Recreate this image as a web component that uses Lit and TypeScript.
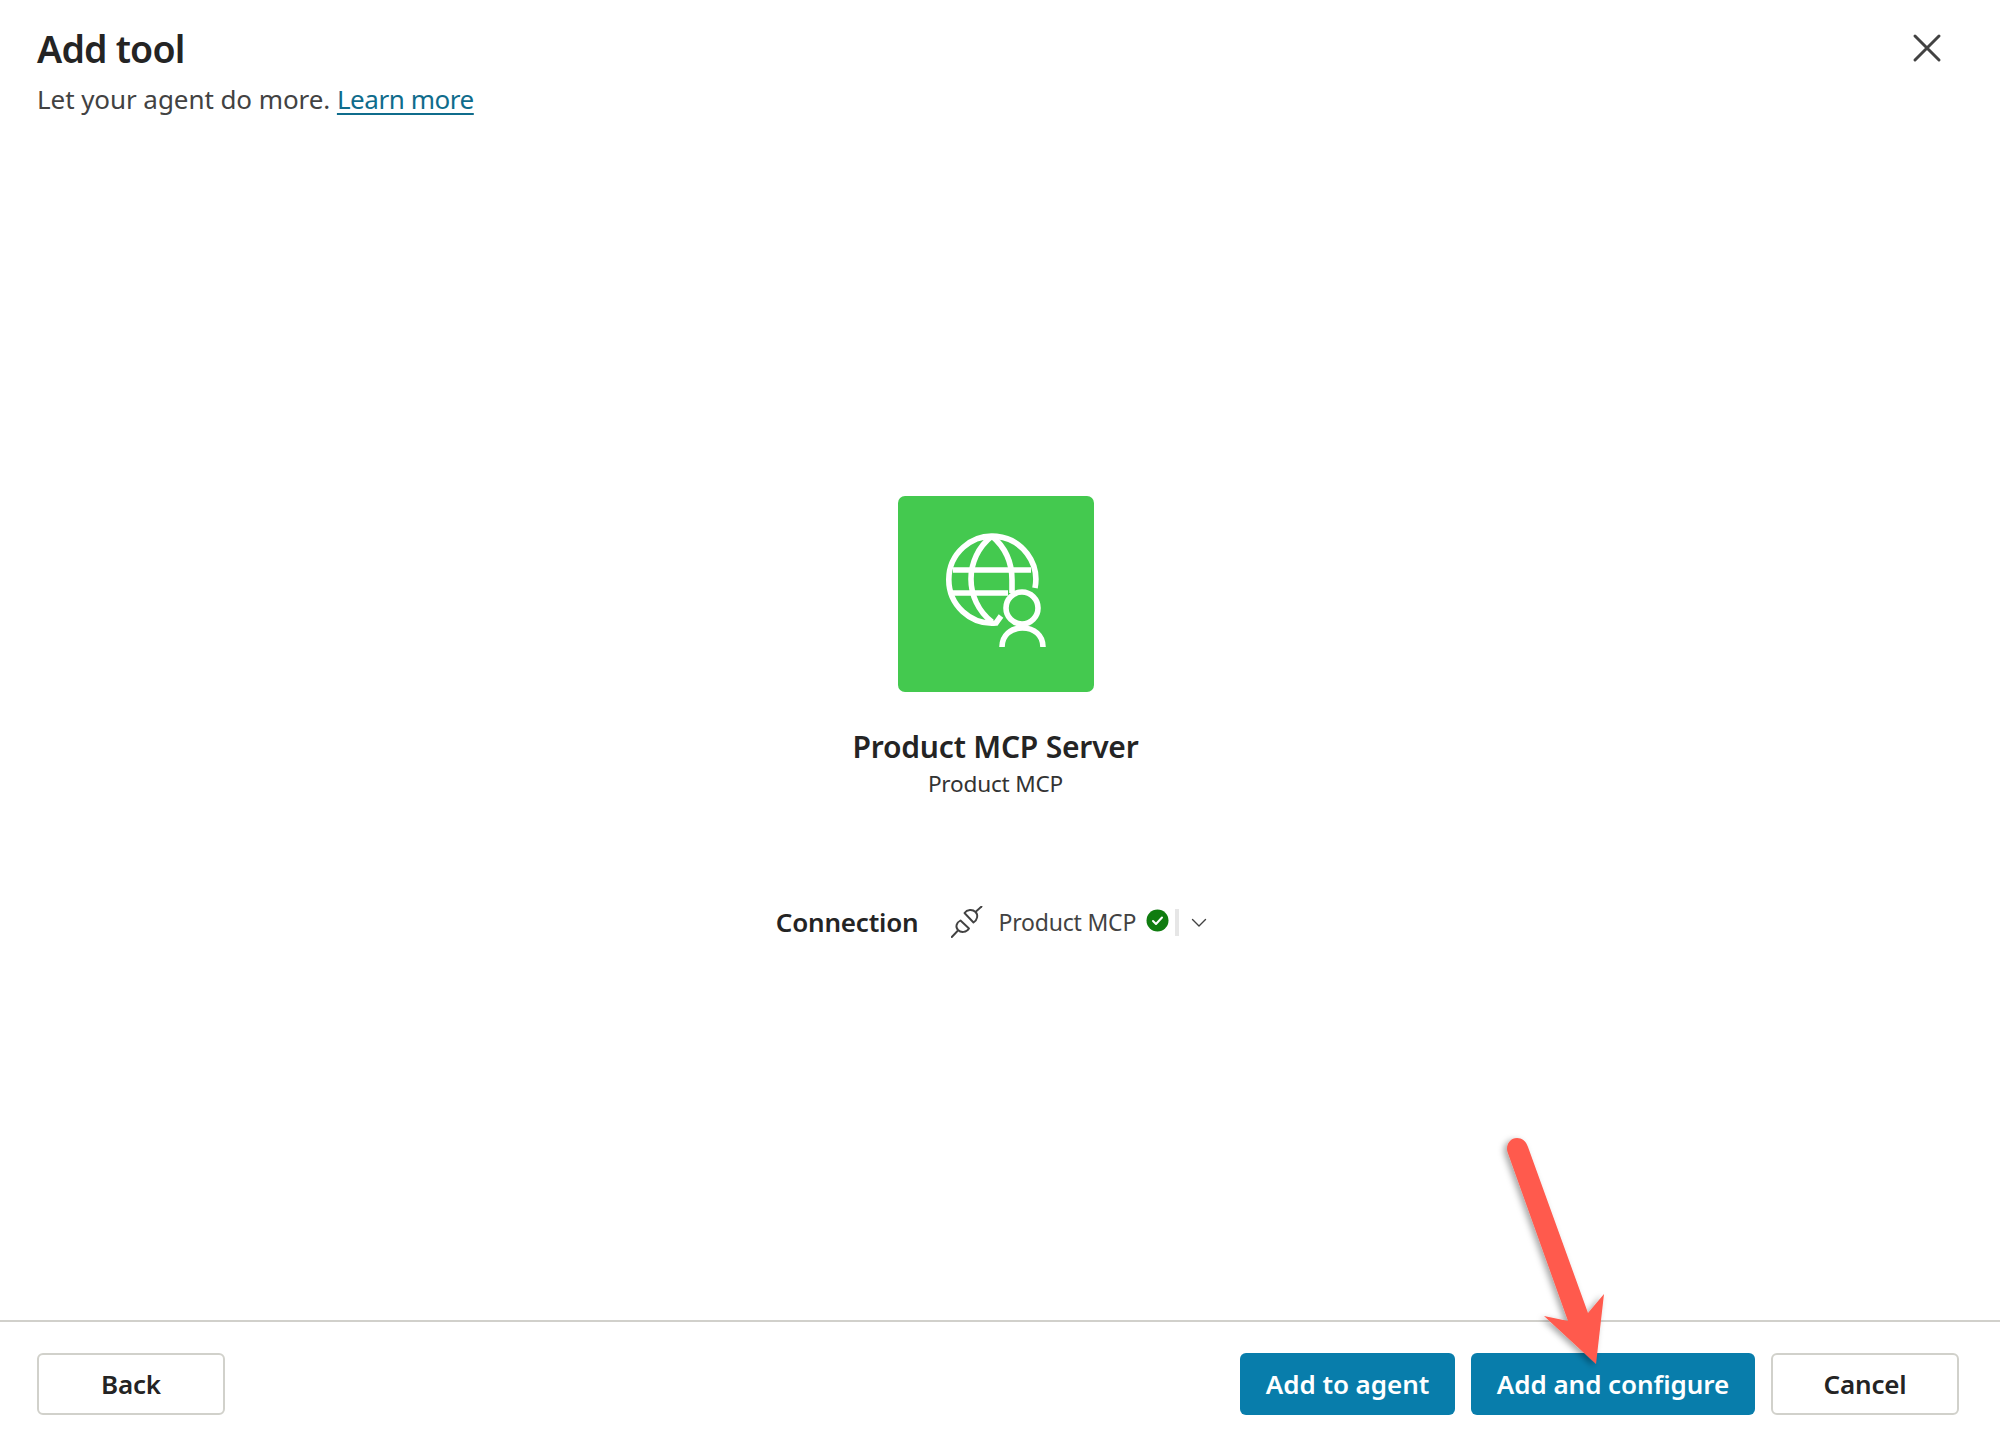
import { LitElement, html, css, svg } from "lit";
import { customElement } from "lit/decorators.js";

const globeIcon = svg`
  <g fill="none" stroke="#fff" stroke-width="5.6">
    <path d="M137 92 A43.5 43.5 0 1 0 98 127 L103 120" />
    <path d="M94 40 C66 62 66 104 94 126" />
    <path d="M94 40 C108 52 114 66 114 84 V97" />
    <path d="M55 74 H133" />
    <path d="M55 97 H110" />
    <circle cx="124" cy="112" r="16" />
    <path d="M104 151 C104 139 113 132 124.5 132 C136 132 145 139 145 151" />
  </g>`;

@customElement("app-root")
export class AppRoot extends LitElement {
  static styles = css`
    :host {
      display: flex;
      flex-direction: column;
      position: relative;
      width: 2000px;
      height: 1443px;
      overflow: hidden;
      background: #fff;
      color: #242424;
      font-family: "Noto Sans", "Open Sans", sans-serif;
    }
    .header {
      display: flex;
      justify-content: space-between;
      align-items: flex-start;
      padding: 24px 50px 0 37px;
    }
    h1 {
      margin: 0;
      font-size: 37.5px;
      line-height: 50px;
      font-weight: 600;
      letter-spacing: -0.8px;
    }
    .sub {
      margin: 5px 0 0;
      font-size: 26px;
      line-height: 40px;
      color: #424242;
      letter-spacing: -0.07px;
    }
    .sub a {
      color: #0f6c8c;
      text-decoration: underline;
      text-underline-offset: 4px;
      text-decoration-thickness: 1.5px;
      letter-spacing: -0.45px;
    }
    .close {
      display: block;
      margin-top: -1px;
      width: 48px;
      height: 48px;
    }
    .main {
      flex: 1;
      display: flex;
      flex-direction: column;
      align-items: center;
      padding: 377px 9px 0 0;
      min-height: 0;
    }
    .tile {
      width: 196px;
      height: 196px;
      border-radius: 7px;
      background: #44c94f;
    }
    .tile svg { display: block; width: 196px; height: 196px; }
    .name {
      margin-top: 35px;
      font-size: 30px;
      line-height: 40px;
      font-weight: 600;
      letter-spacing: -0.2px;
    }
    .vendor {
      margin-top: -1px;
      font-size: 22.6px;
      line-height: 36px;
      color: #333;
      letter-spacing: -0.2px;
    }
    .conn {
      margin-top: 100px;
      display: flex;
      align-items: center;
      height: 40px;
      margin-left: -8px;
    }
    .conn-label {
      font-size: 26px;
      font-weight: 600;
      letter-spacing: -0.2px;
      margin-right: 33px;
    }
    .plug { display: block; width: 32px; height: 32px; margin-right: 15px; }
    .conn-value {
      font-size: 23px;
      color: #424242;
      letter-spacing: -0.2px;
    }
    .ok { display: block; width: 23px; height: 23px; margin: -3px 0 0 10px; }
    .sep { width: 4px; height: 27px; background: #e6e6e6; margin: 0 12px 0 6px; }
    .chev { display: block; width: 16px; height: 10px; margin-top: 2px; }
    .footer {
      border-top: 2px solid #d1d0cb;
      display: flex;
      align-items: center;
      justify-content: space-between;
      padding: 31px 41px 28px 37px;
    }
    .actions { display: flex; gap: 16px; }
    button {
      font: 600 26px/1 "Noto Sans", "Open Sans", sans-serif;
      letter-spacing: -0.2px;
      height: 62px;
      border-radius: 6px;
      padding: 0;
      box-sizing: border-box;
      cursor: pointer;
    }
    .secondary {
      width: 188px;
      background: #fff;
      color: #242424;
      border: 2px solid #d1d1cb;
    }
    .primary {
      background: #087dab;
      color: #fff;
      border: none;
      letter-spacing: -0.05px;
    }
    .agent { width: 215px; }
    .configure { width: 284px; }
    .arrow {
      position: absolute;
      left: 1480px;
      top: 1120px;
      width: 140px;
      height: 260px;
      pointer-events: none;
    }
  `;

  render() {
    return html`
      <header class="header">
        <div>
          <h1>Add tool</h1>
          <p class="sub">Let your agent do more. <a href="#">Learn more</a></p>
        </div>
        <svg class="close" viewBox="0 0 48 48" fill="none" stroke="#424242" stroke-width="3" stroke-linecap="round">
          <path d="M13 13 L37 37 M37 13 L13 37"></path>
        </svg>
      </header>

      <main class="main">
        <div class="tile">
          <svg viewBox="0 0 196 196">${globeIcon}</svg>
        </div>
        <div class="name">Product MCP Server</div>
        <div class="vendor">Product MCP</div>
        <div class="conn">
          <span class="conn-label">Connection</span>
          <svg class="plug" viewBox="0 0 32 32" fill="none" stroke="#424242" stroke-width="1.9" stroke-linecap="round" stroke-linejoin="round">
            <path d="M0.8 31 L6.5 25"></path>
            <path d="M9.5 14.5 L18 22.5 C15.5 26.5 10 27 7 24 C4 21 5.5 16.5 9.5 14.5 Z"></path>
            <path d="M13.5 7 L22.5 16.5 C26.5 14 27.5 9 24.5 6 C21.5 3 16 3.5 13.5 7 Z"></path>
            <path d="M25 5.5 L30.5 0.5"></path>
          </svg>
          <span class="conn-value">Product MCP</span>
          <svg class="ok" viewBox="0 0 23 23">
            <circle cx="11.5" cy="11.5" r="11" fill="#107c10"></circle>
            <path d="M7 12 L10 15 L16 8.5" fill="none" stroke="#fff" stroke-width="2" stroke-linecap="round" stroke-linejoin="round"></path>
          </svg>
          <span class="sep"></span>
          <svg class="chev" viewBox="0 0 16 10" fill="none" stroke="#424242" stroke-width="1.4" stroke-linecap="round" stroke-linejoin="round">
            <path d="M1.5 1.5 L8 8 L14.5 1.5"></path>
          </svg>
        </div>
      </main>

      <footer class="footer">
        <button class="secondary">Back</button>
        <div class="actions">
          <button class="primary agent">Add to agent</button>
          <button class="primary configure">Add and configure</button>
          <button class="secondary">Cancel</button>
        </div>
      </footer>

      <svg class="arrow" viewBox="0 0 140 260">
        <defs>
          <filter id="sh" x="-30%" y="-10%" width="160%" height="120%">
            <feDropShadow dx="-3" dy="2" stdDeviation="3" flood-color="#000" flood-opacity="0.35"></feDropShadow>
          </filter>
        </defs>
        <path
          fill="#ff5a4d"
          filter="url(#sh)"
          d="M27.5 32 C25.5 25 30 18 37 18 C42 18 46 21 48 27 L108 193 L124 174 L116 244 L64 196 L88 201 Z"
        ></path>
      </svg>
    `;
  }
}
